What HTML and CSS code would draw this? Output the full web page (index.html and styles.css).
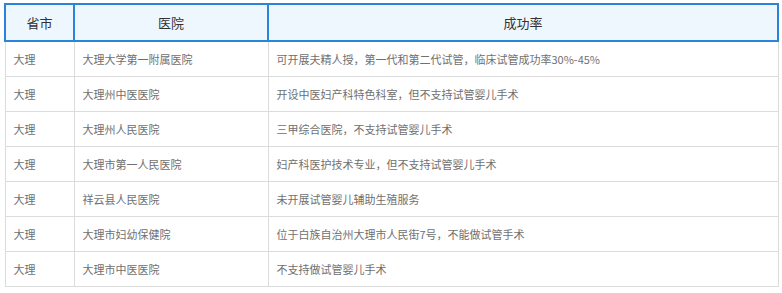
FILE: index.html
```html
<!DOCTYPE html>
<html lang="zh">
<head>
<meta charset="utf-8">
<link rel="stylesheet" href="styles.css">
</head>
<body>
<table class="tbl">
  <colgroup>
    <col class="c1"><col class="c2"><col class="c3">
  </colgroup>
  <thead>
    <tr><th>省市</th><th>医院</th><th>成功率</th></tr>
  </thead>
  <tbody>
    <tr><td>大理</td><td>大理大学第一附属医院</td><td>可开展夫精人授，第一代和第二代试管，临床试管成功率30%-45%</td></tr>
    <tr><td>大理</td><td>大理州中医医院</td><td>开设中医妇产科特色科室，但不支持试管婴儿手术</td></tr>
    <tr><td>大理</td><td>大理州人民医院</td><td>三甲综合医院，不支持试管婴儿手术</td></tr>
    <tr><td>大理</td><td>大理市第一人民医院</td><td>妇产科医护技术专业，但不支持试管婴儿手术</td></tr>
    <tr><td>大理</td><td>祥云县人民医院</td><td>未开展试管婴儿辅助生殖服务</td></tr>
    <tr><td>大理</td><td>大理市妇幼保健院</td><td>位于白族自治州大理市人民街7号，不能做试管手术</td></tr>
    <tr><td>大理</td><td>大理市中医医院</td><td>不支持做试管婴儿手术</td></tr>
  </tbody>
</table>
</body>
</html>
```

FILE: styles.css
```css
html, body {
  margin: 0;
  padding: 0;
  background: #fff;
}
body {
  padding: 3px 5px 0 4px;
  font-family: "Noto Sans CJK SC", "Microsoft YaHei", sans-serif;
}
.tbl {
  width: 773px;
  border-collapse: collapse;
  table-layout: fixed;
}
.c1 { width: 69px; }
.c2 { width: 194px; }
.c3 { width: 510px; }
.tbl th {
  height: 35px;
  padding: 0;
  background: #eef6fe;
  border: 2px solid #2a84d9;
  color: #333;
  font-size: 13px;
  font-weight: normal;
  text-align: center;
}
.tbl td {
  height: 34px;
  padding: 0 0 0 8px;
  border: 1px solid #dcdcdc;
  color: #707070;
  font-size: 11px;
  text-align: left;
  vertical-align: middle;
}
```
